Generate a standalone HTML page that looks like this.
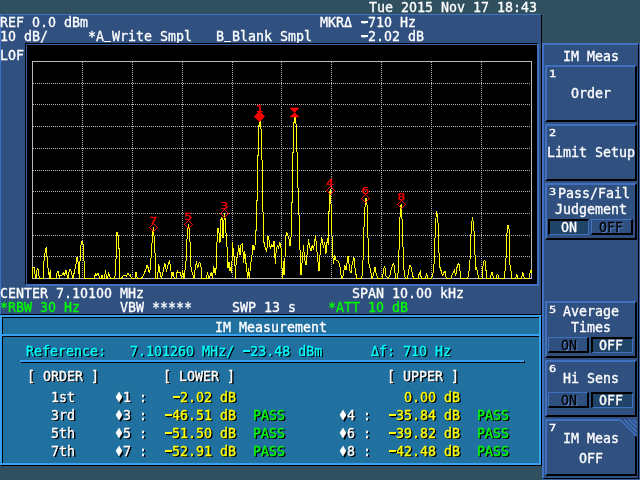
<!DOCTYPE html>
<html><head><meta charset="utf-8"><title>IM Measurement</title>
<style>
html,body{margin:0;padding:0}
body{width:640px;height:480px;overflow:hidden;position:relative;background:#305060;
 font-family:"DejaVu Sans Mono","Liberation Mono",monospace;color:#fff}
div{position:absolute;box-sizing:border-box}
.t{font-size:13.3px;line-height:14px;white-space:pre;letter-spacing:0}
.t,.m,.s{-webkit-text-stroke:.3px currentColor}
#w{left:0;top:0;width:640px;height:480px;overflow:hidden;will-change:transform}
.m{font-size:13.3px;line-height:14px;white-space:pre;transform:scale(1,1.1);transform-origin:0 11px}
.g{color:#00ff00}.y{color:#ffff00}.c{color:#00ffff}
.emb{color:#000;text-shadow:1px 1px 0 #6090d8}
.sh{text-shadow:1px 1px 0 #000,1.4px 1.4px 0 #000}
.d{transform:scale(1,1.25);transform-origin:50% 43%}
.zc{width:2px;height:4px}
.hy{width:7px;height:2px}
.us{width:7px;height:1px;background:#fff;top:41px}
.s{font-size:9.2px;line-height:10px;white-space:pre;transform:scaleX(1.3);transform-origin:0 0}
.btn{left:545px;width:92px;height:57px;background:#305080;border-style:solid;border-width:2px;border-color:#4070c0 #000 #000 #4070c0}
svg{position:absolute;left:0;top:0}
</style></head><body><div id="w">

<div class="t " style="left:369px;top:1px">Tue 2015 Nov 17 18:43</div>
<div class="zc" style="left:412px;top:5px;background:#305060"></div>
<div style="left:0;top:14px;width:542px;height:301px;background:#305080;border-style:solid;border-width:1px;border-color:#4070c0 #000 #000 #4070c0"></div>
<div class="t " style="left:0px;top:16px">REF 0.0 dBm</div>
<div class="zc" style="left:35px;top:20px;background:#305080"></div>
<div class="zc" style="left:51px;top:20px;background:#305080"></div>
<div class="t " style="left:320px;top:16px">MKRΔ -710 Hz</div>
<div class="hy" style="left:361px;top:21px;background:#fff"></div>
<div class="zc" style="left:387px;top:20px;background:#305080"></div>
<div class="t " style="left:0px;top:30px">10 dB/</div>
<div class="zc" style="left:11px;top:34px;background:#305080"></div>
<div class="t " style="left:88px;top:30px">*A_Write Smpl</div>
<div class="t " style="left:216px;top:30px">B_Blank Smpl</div>
<div class="t " style="left:360px;top:30px">-2.02 dB</div>
<div class="hy" style="left:361px;top:35px;background:#fff"></div>
<div class="zc" style="left:387px;top:34px;background:#305080"></div>
<div class="t " style="left:0px;top:49px">LOF</div>
<div class="t " style="left:0px;top:287px">CENTER 7.10100 MHz</div>
<div class="zc" style="left:83px;top:291px;background:#305080"></div>
<div class="zc" style="left:99px;top:291px;background:#305080"></div>
<div class="zc" style="left:107px;top:291px;background:#305080"></div>
<div class="t " style="left:352px;top:287px">SPAN 10.00 kHz</div>
<div class="zc" style="left:403px;top:291px;background:#305080"></div>
<div class="zc" style="left:419px;top:291px;background:#305080"></div>
<div class="zc" style="left:427px;top:291px;background:#305080"></div>
<div class="t g" style="left:0px;top:301px">*RBW 30 Hz</div>
<div class="zc" style="left:51px;top:305px;background:#305080"></div>
<div class="t " style="left:120px;top:301px">VBW *****</div>
<div class="t " style="left:232px;top:301px">SWP 13 s</div>
<div class="t g" style="left:328px;top:301px">*ATT 10 dB</div>
<div class="zc" style="left:379px;top:305px;background:#305080"></div>
<div style="left:25px;top:43px;width:514px;height:243px;background:#000;border-style:solid;border-width:1px 2px 2px 1px;border-color:#000 #4070c0 #4070c0 #000"></div>
<div style="left:26px;top:44px;width:511px;height:240px;border-style:solid;border-width:1px 0 0 1px;border-color:#3860a0"></div>
<div class="us" style="left:104px"></div><div class="us" style="left:224px"></div>
<svg width="640" height="480" viewBox="0 0 640 480">
<g stroke="#b8b8b8" stroke-width="1" shape-rendering="crispEdges" fill="none">
<rect x="32.5" y="61.5" width="499" height="217"/>
<line x1="82.5" y1="62" x2="82.5" y2="278" stroke-dasharray="1 1"/>
<line x1="132.5" y1="62" x2="132.5" y2="278" stroke-dasharray="1 1"/>
<line x1="182.5" y1="62" x2="182.5" y2="278" stroke-dasharray="1 1"/>
<line x1="232.5" y1="62" x2="232.5" y2="278" stroke-dasharray="1 1"/>
<line x1="281.5" y1="62" x2="281.5" y2="278" stroke-dasharray="1 1"/>
<line x1="331.5" y1="62" x2="331.5" y2="278" stroke-dasharray="1 1"/>
<line x1="381.5" y1="62" x2="381.5" y2="278" stroke-dasharray="1 1"/>
<line x1="431.5" y1="62" x2="431.5" y2="278" stroke-dasharray="1 1"/>
<line x1="481.5" y1="62" x2="481.5" y2="278" stroke-dasharray="1 1"/>
<line x1="33" y1="83.5" x2="531" y2="83.5" stroke-dasharray="1 1"/>
<line x1="33" y1="104.5" x2="531" y2="104.5" stroke-dasharray="1 1"/>
<line x1="33" y1="126.5" x2="531" y2="126.5" stroke-dasharray="1 1"/>
<line x1="33" y1="148.5" x2="531" y2="148.5" stroke-dasharray="1 1"/>
<line x1="33" y1="170.5" x2="531" y2="170.5" stroke-dasharray="1 1"/>
<line x1="33" y1="191.5" x2="531" y2="191.5" stroke-dasharray="1 1"/>
<line x1="33" y1="213.5" x2="531" y2="213.5" stroke-dasharray="1 1"/>
<line x1="33" y1="235.5" x2="531" y2="235.5" stroke-dasharray="1 1"/>
<line x1="33" y1="256.5" x2="531" y2="256.5" stroke-dasharray="1 1"/>
</g>
<path d="M32.5,278.5 L33.0,267.5 L34.5,267.5 L35.2,276.0 L36.0,278.5 L37.0,270.0 L38.0,268.5 L39.0,276.0 L39.5,278.5 L43.0,278.5 L44.0,261.0 L45.5,249.0 L46.5,248.0 L47.5,265.0 L48.6,271.0 L49.3,278.5 L50.2,270.5 L51.0,278.5 L56.0,278.5 L57.3,272.0 L58.5,271.5 L59.3,278.5 L60.0,275.5 L61.0,275.0 L62.0,275.0 L63.6,272.5 L64.3,276.0 L66.0,270.0 L67.3,276.0 L68.0,278.5 L69.3,270.0 L70.5,269.4 L71.7,274.0 L73.0,278.5 L74.2,272.5 L75.5,267.5 L77.0,257.0 L78.6,265.0 L79.2,278.5 L80.2,257.5 L81.0,245.0 L82.0,241.0 L83.3,245.0 L84.2,265.0 L85.0,278.5 L94.0,278.5 L95.5,274.0 L96.2,276.0 L98.0,273.0 L99.8,278.5 L101.0,278.5 L102.0,275.5 L103.0,278.5 L104.2,278.5 L105.5,271.0 L106.7,278.5 L107.5,278.5 L108.7,272.5 L110.3,278.5 L114.8,278.5 L115.7,267.5 L117.0,232.5 L118.2,236.0 L119.3,253.0 L120.0,278.5 L121.5,278.5 L123.0,276.0 L125.0,275.0 L126.5,276.5 L128.0,273.0 L129.3,276.0 L130.3,274.5 L131.5,278.5 L135.0,278.5 L136.0,272.0 L137.3,278.5 L141.5,278.5 L144.0,274.0 L145.7,270.0 L147.0,265.0 L148.0,267.5 L149.3,273.0 L150.3,268.3 L152.0,243.3 L153.3,227.5 L154.2,238.0 L155.0,253.0 L156.0,278.5 L157.5,278.5 L158.7,264.0 L160.0,272.5 L161.5,278.5 L163.2,271.0 L164.8,263.0 L166.5,271.7 L168.0,265.0 L169.5,261.0 L170.7,267.0 L171.5,278.5 L173.0,271.7 L174.3,278.5 L176.0,278.5 L177.3,270.8 L179.0,273.0 L180.5,272.5 L181.5,278.5 L182.7,270.8 L184.0,278.5 L184.8,271.7 L186.0,261.7 L187.3,232.5 L188.7,224.7 L189.8,236.7 L191.0,266.7 L192.3,273.0 L194.0,278.5 L195.3,268.0 L196.5,262.0 L197.7,268.0 L199.0,263.0 L200.0,262.8 L201.2,268.0 L202.0,278.5 L206.3,278.5 L207.5,273.0 L208.7,278.5 L210.0,276.0 L211.3,272.5 L212.5,278.5 L213.7,266.7 L215.0,273.0 L215.8,275.0 L216.7,246.7 L218.0,228.3 L219.0,233.0 L220.0,243.0 L220.8,220.0 L222.0,217.5 L223.0,238.0 L223.8,221.7 L224.7,213.3 L225.8,230.0 L227.0,246.7 L228.0,268.0 L229.0,261.7 L230.0,270.8 L230.8,267.0 L231.7,273.0 L232.5,242.5 L233.7,255.0 L234.7,258.0 L235.5,278.5 L236.3,258.0 L237.5,257.0 L238.7,245.8 L240.0,255.0 L241.0,245.0 L242.5,243.3 L243.7,262.5 L244.7,251.7 L245.8,261.7 L247.0,271.7 L247.8,278.5 L248.7,268.0 L249.5,278.5 L250.5,265.0 L251.7,258.3 L253.0,245.0 L254.0,250.0 L255.0,245.8 L255.8,230.8 L256.5,230.0 L256.5,200.0 L257.5,200.0 L257.5,155.0 L258.5,155.0 L258.5,125.0 L259.5,125.0 L259.5,120.5 L260.5,120.5 L260.5,129.0 L261.5,129.0 L261.5,160.0 L262.5,160.0 L262.5,212.0 L263.5,212.0 L263.5,242.5 L264.0,242.5 L265.3,248.3 L266.7,251.7 L268.0,235.8 L269.0,240.0 L270.3,249.0 L271.7,244.0 L273.0,246.7 L274.0,240.8 L275.3,263.3 L276.3,248.3 L277.5,245.8 L278.5,248.0 L279.7,242.5 L280.8,244.0 L281.7,261.7 L282.5,278.5 L283.3,261.7 L284.0,275.0 L285.0,258.0 L285.8,236.7 L286.7,232.5 L288.0,235.8 L289.0,239.0 L290.0,245.8 L290.8,238.0 L291.5,236.0 L291.5,202.0 L292.5,202.0 L292.5,152.0 L293.5,152.0 L293.5,122.0 L294.5,122.0 L294.5,117.5 L295.5,117.5 L295.5,124.0 L296.5,124.0 L296.5,152.0 L297.5,152.0 L297.5,188.0 L298.5,188.0 L298.5,215.0 L299.5,215.0 L299.5,236.0 L300.0,250.0 L301.0,275.0 L302.3,260.0 L303.5,246.0 L304.7,260.0 L306.0,265.0 L307.3,252.5 L308.5,240.0 L309.7,247.5 L311.0,251.0 L312.3,245.0 L313.5,250.0 L315.5,236.0 L317.3,255.0 L319.0,271.0 L320.5,247.5 L321.7,237.5 L323.5,247.5 L324.7,242.5 L326.0,253.7 L327.3,238.7 L328.5,245.0 L329.3,192.5 L330.5,190.0 L331.5,217.5 L332.5,252.5 L333.5,263.7 L334.7,255.0 L336.0,260.0 L338.0,261.0 L339.7,265.0 L341.0,275.0 L342.0,278.5 L343.3,275.0 L344.7,265.0 L346.0,270.0 L348.0,256.0 L349.7,270.0 L351.0,273.0 L352.0,265.0 L354.0,257.5 L355.5,272.5 L357.0,278.5 L361.0,278.5 L362.3,275.0 L363.0,260.0 L364.0,227.5 L365.0,207.5 L365.5,198.5 L366.5,198.5 L367.3,209.0 L368.0,237.5 L369.0,263.7 L370.5,270.0 L372.0,278.5 L373.5,275.0 L375.0,267.5 L376.5,275.0 L378.0,278.5 L382.5,278.5 L383.5,270.0 L384.7,266.0 L386.0,276.0 L388.5,278.5 L390.0,275.0 L391.0,270.0 L392.5,265.0 L393.7,263.0 L395.0,272.5 L396.0,278.5 L397.5,278.5 L398.7,265.0 L399.5,227.5 L400.5,207.5 L401.2,204.3 L402.5,227.5 L403.5,265.0 L404.5,275.0 L405.5,278.5 L407.5,278.5 L408.7,270.0 L410.0,265.0 L411.3,267.5 L412.5,275.0 L413.7,278.5 L418.0,278.5 L419.5,272.5 L420.5,271.0 L421.2,278.5 L425.0,278.5 L426.7,273.7 L428.0,278.5 L431.5,278.5 L432.5,276.0 L433.7,270.0 L434.5,255.0 L435.5,222.5 L436.7,211.0 L438.0,222.5 L439.0,252.5 L440.0,267.5 L441.2,271.0 L442.5,276.0 L443.7,272.5 L445.0,271.5 L446.2,278.5 L451.0,278.5 L452.5,273.7 L454.5,270.0 L455.7,276.0 L457.0,267.5 L458.2,263.7 L459.5,265.0 L460.5,276.0 L461.2,278.5 L467.5,278.5 L468.7,275.0 L470.0,260.0 L470.7,240.0 L471.7,222.5 L472.5,218.0 L473.7,225.0 L474.5,240.0 L475.5,270.0 L476.5,267.5 L477.5,272.5 L478.7,278.5 L482.0,278.5 L482.6,271.7 L483.3,261.7 L484.7,260.0 L485.5,262.5 L486.3,275.0 L487.0,278.5 L490.3,278.5 L491.3,273.0 L492.0,271.7 L493.0,276.0 L493.7,278.5 L496.3,278.5 L497.2,274.0 L498.0,275.0 L498.7,278.5 L504.7,278.5 L505.5,260.0 L506.3,256.7 L506.8,236.7 L507.5,225.0 L508.7,225.0 L509.3,232.5 L509.7,255.0 L510.1,267.5 L510.8,268.0 L511.4,275.0 L512.0,278.5 L515.8,278.5 L516.7,274.0 L517.7,278.5 L521.7,278.5 L522.5,273.0 L523.5,273.5 L524.2,278.5 L529.0,278.5 L530.0,273.0 L531.0,270.0 L531.8,273.0" fill="none" stroke="#ffff00" stroke-width="1" stroke-linejoin="round" shape-rendering="crispEdges"/>
<path d="M259.5,112.0 L264.0,116.5 L259.5,121.0 L255.0,116.5 Z" fill="#ff0000" stroke="#ff0000" stroke-width="1" shape-rendering="crispEdges"/>
<text transform="translate(259.5,112) scale(1.4,1)" x="0" y="0" text-anchor="middle" font-family="DejaVu Sans Mono,monospace" font-size="9.2" fill="#ff0000" stroke="#ff0000" stroke-width=".35">1</text>
<path d="M290,108 L299,108 L294.5,112.5 L299,117 L290,117 L294.5,112.5 Z" fill="#ff0000" stroke="#ff0000" stroke-width=".6"/>
<path d="M153.5,223.5 L157.5,227.5 L153.5,231.5 L149.5,227.5 Z" fill="none" stroke="#ff0000" stroke-width="1" shape-rendering="crispEdges"/>
<text transform="translate(153.5,223.5) scale(1.4,1)" x="0" y="0" text-anchor="middle" font-family="DejaVu Sans Mono,monospace" font-size="9.2" fill="#ff0000" stroke="#ff0000" stroke-width=".35">7</text>
<path d="M188.5,220.5 L192.5,224.5 L188.5,228.5 L184.5,224.5 Z" fill="none" stroke="#ff0000" stroke-width="1" shape-rendering="crispEdges"/>
<text transform="translate(188.5,220) scale(1.4,1)" x="0" y="0" text-anchor="middle" font-family="DejaVu Sans Mono,monospace" font-size="9.2" fill="#ff0000" stroke="#ff0000" stroke-width=".35">5</text>
<path d="M224.5,209.5 L228.5,213.5 L224.5,217.5 L220.5,213.5 Z" fill="none" stroke="#ff0000" stroke-width="1" shape-rendering="crispEdges"/>
<text transform="translate(224.5,209) scale(1.4,1)" x="0" y="0" text-anchor="middle" font-family="DejaVu Sans Mono,monospace" font-size="9.2" fill="#ff0000" stroke="#ff0000" stroke-width=".35">3</text>
<path d="M330.5,186.5 L334.5,190.5 L330.5,194.5 L326.5,190.5 Z" fill="none" stroke="#ff0000" stroke-width="1" shape-rendering="crispEdges"/>
<text transform="translate(330,186) scale(1.4,1)" x="0" y="0" text-anchor="middle" font-family="DejaVu Sans Mono,monospace" font-size="9.2" fill="#ff0000" stroke="#ff0000" stroke-width=".35">4</text>
<path d="M365.5,194.5 L369.5,198.5 L365.5,202.5 L361.5,198.5 Z" fill="none" stroke="#ff0000" stroke-width="1" shape-rendering="crispEdges"/>
<text transform="translate(365.3,194) scale(1.4,1)" x="0" y="0" text-anchor="middle" font-family="DejaVu Sans Mono,monospace" font-size="9.2" fill="#ff0000" stroke="#ff0000" stroke-width=".35">6</text>
<path d="M401.5,200.5 L405.5,204.5 L401.5,208.5 L397.5,204.5 Z" fill="none" stroke="#ff0000" stroke-width="1" shape-rendering="crispEdges"/>
<text transform="translate(401.5,200) scale(1.4,1)" x="0" y="0" text-anchor="middle" font-family="DejaVu Sans Mono,monospace" font-size="9.2" fill="#ff0000" stroke="#ff0000" stroke-width=".35">8</text>
</svg>
<div style="left:1px;top:316px;width:541px;height:150px;border:2px solid #000"></div>
<div style="left:0;top:315px;width:541px;height:150px;border:2px solid #38a0f0"></div>
<div style="left:3px;top:318px;width:536px;height:145px;background:#2070a0"></div>
<div style="left:2px;top:336px;width:537px;height:1px;background:#000"></div>
<div style="left:2px;top:334px;width:538px;height:2px;background:#38a0f0"></div>
<div style="left:21px;top:361px;width:504px;height:2px;background:#000"></div>
<div style="left:20px;top:360px;width:504px;height:2px;background:#38a0f0"></div>
<div class="m " style="left:215.0px;top:321px">IM Measurement</div>
<div class="t c sh" style="left:26px;top:345px">Reference:   7.101260 MHz/ -23.48 dBm</div>
<div class="zc" style="left:157px;top:349px;background:#2070a0"></div>
<div class="zc" style="left:189px;top:349px;background:#2070a0"></div>
<div class="hy" style="left:243px;top:350px;background:#00ffff;box-shadow:1px 1px 0 #000"></div>
<div class="t c sh" style="left:371px;top:345px">Δf: 710 Hz</div>
<div class="zc" style="left:422px;top:349px;background:#2070a0"></div>
<div class="t sh" style="left:27px;top:370px">[ ORDER ]</div>
<div class="t sh" style="left:163px;top:370px">[ LOWER ]</div>
<div class="t sh" style="left:387px;top:370px">[ UPPER ]</div>
<div class="t sh" style="left:51px;top:391px">1st</div>
<div class="t sh d" style="left:115px;top:391px">♦</div>
<div class="t sh" style="left:123px;top:391px">1 :</div>
<div class="t y sh" style="left:156px;top:391px">  -2.02 dB</div>
<div class="hy" style="left:173px;top:396px;background:#ffff00;box-shadow:1px 1px 0 #000"></div>
<div class="zc" style="left:199px;top:395px;background:#2070a0"></div>
<div class="t y sh" style="left:388px;top:391px">  0.00 dB</div>
<div class="zc" style="left:407px;top:395px;background:#2070a0"></div>
<div class="zc" style="left:423px;top:395px;background:#2070a0"></div>
<div class="zc" style="left:431px;top:395px;background:#2070a0"></div>
<div class="t sh" style="left:51px;top:409px">3rd</div>
<div class="t sh d" style="left:115px;top:409px">♦</div>
<div class="t sh" style="left:123px;top:409px">3 :</div>
<div class="t y sh" style="left:164px;top:409px">-46.51 dB</div>
<div class="hy" style="left:165px;top:414px;background:#ffff00;box-shadow:1px 1px 0 #000"></div>
<div class="t g sh" style="left:253px;top:409px">PASS</div>
<div class="t sh d" style="left:339px;top:409px">♦</div>
<div class="t sh" style="left:347px;top:409px">4 :</div>
<div class="t y sh" style="left:388px;top:409px">-35.84 dB</div>
<div class="hy" style="left:389px;top:414px;background:#ffff00;box-shadow:1px 1px 0 #000"></div>
<div class="t g sh" style="left:477px;top:409px">PASS</div>
<div class="t sh" style="left:51px;top:427px">5th</div>
<div class="t sh d" style="left:115px;top:427px">♦</div>
<div class="t sh" style="left:123px;top:427px">5 :</div>
<div class="t y sh" style="left:164px;top:427px">-51.50 dB</div>
<div class="hy" style="left:165px;top:432px;background:#ffff00;box-shadow:1px 1px 0 #000"></div>
<div class="zc" style="left:207px;top:431px;background:#2070a0"></div>
<div class="t g sh" style="left:253px;top:427px">PASS</div>
<div class="t sh d" style="left:339px;top:427px">♦</div>
<div class="t sh" style="left:347px;top:427px">6 :</div>
<div class="t y sh" style="left:388px;top:427px">-39.82 dB</div>
<div class="hy" style="left:389px;top:432px;background:#ffff00;box-shadow:1px 1px 0 #000"></div>
<div class="t g sh" style="left:477px;top:427px">PASS</div>
<div class="t sh" style="left:51px;top:445px">7th</div>
<div class="t sh d" style="left:115px;top:445px">♦</div>
<div class="t sh" style="left:123px;top:445px">7 :</div>
<div class="t y sh" style="left:164px;top:445px">-52.91 dB</div>
<div class="hy" style="left:165px;top:450px;background:#ffff00;box-shadow:1px 1px 0 #000"></div>
<div class="t g sh" style="left:253px;top:445px">PASS</div>
<div class="t sh d" style="left:339px;top:445px">♦</div>
<div class="t sh" style="left:347px;top:445px">8 :</div>
<div class="t y sh" style="left:388px;top:445px">-42.48 dB</div>
<div class="hy" style="left:389px;top:450px;background:#ffff00;box-shadow:1px 1px 0 #000"></div>
<div class="t g sh" style="left:477px;top:445px">PASS</div>
<div style="left:542px;top:43px;width:98px;height:437px;background:#3860a0"></div>
<div style="left:542px;top:43px;width:97px;height:436px;background:#305080;border-style:solid;border-width:2px 1px 1px 2px;border-color:#4070c0 #000 #000 #4070c0"></div>
<div class="m " style="left:563.0px;top:50px">IM Meas</div>
<div class="btn" style="top:65px"></div>
<div class="s" style="left:549px;top:69px">1</div>
<div class="btn" style="top:124px"></div>
<div class="s" style="left:549px;top:128px">2</div>
<div class="btn" style="top:183px"></div>
<div class="s" style="left:549px;top:187px">3</div>
<div class="btn" style="top:301px"></div>
<div class="s" style="left:549px;top:305px">5</div>
<div class="btn" style="top:360px"></div>
<div class="s" style="left:549px;top:364px">6</div>
<div class="btn" style="top:419px"></div>
<div class="s" style="left:549px;top:423px">7</div>
<div class="t " style="left:571px;top:87px">Order</div>
<div class="t " style="left:547px;top:146px">Limit Setup</div>
<div class="t " style="left:558px;top:187px">Pass/Fail</div>
<div class="t " style="left:555px;top:203px">Judgement</div>
<div style="left:548px;top:219px;width:41px;height:16px;background:#204468;border-style:solid;border-width:2px 1px 1px 2px;border-color:#000 #4070c0 #4070c0 #000"></div>
<div style="left:591px;top:219px;width:42px;height:16px;background:#305080;border-style:solid;border-width:1px 2px 2px 1px;border-color:#4070c0 #000 #000 #4070c0"></div>
<div class="t " style="left:561px;top:221px">ON</div>
<div class="t emb" style="left:599px;top:221px">OFF</div>
<div class="t " style="left:563px;top:305px">Average</div>
<div class="t " style="left:571px;top:321px">Times</div>
<div style="left:548px;top:337px;width:41px;height:16px;background:#305080;border-style:solid;border-width:1px 2px 2px 1px;border-color:#4070c0 #000 #000 #4070c0"></div>
<div style="left:591px;top:337px;width:42px;height:16px;background:#204468;border-style:solid;border-width:2px 1px 1px 2px;border-color:#000 #4070c0 #4070c0 #000"></div>
<div class="t emb" style="left:561px;top:339px">ON</div>
<div class="t " style="left:599px;top:339px">OFF</div>
<div class="t " style="left:563px;top:372px">Hi Sens</div>
<div style="left:548px;top:392px;width:41px;height:16px;background:#305080;border-style:solid;border-width:1px 2px 2px 1px;border-color:#4070c0 #000 #000 #4070c0"></div>
<div style="left:591px;top:392px;width:42px;height:16px;background:#204468;border-style:solid;border-width:2px 1px 1px 2px;border-color:#000 #4070c0 #4070c0 #000"></div>
<div class="t emb" style="left:561px;top:394px">ON</div>
<div class="t " style="left:599px;top:394px">OFF</div>
<div class="t " style="left:563px;top:432px">IM Meas</div>
<div class="t " style="left:579px;top:452px">OFF</div>
<svg width="640" height="480" viewBox="0 0 640 480"><path d="M619,419 L637,419 L637,437 Z" fill="#305080"/><g stroke="#4070c0" stroke-width="1.6"><line x1="620" y1="419.5" x2="636.5" y2="436"/><line x1="624.3" y1="419.5" x2="636.5" y2="431.7"/><line x1="628.6" y1="419.5" x2="636.5" y2="427.4"/><line x1="632.9" y1="419.5" x2="636.5" y2="423.1"/></g></svg>
</div></body></html>
